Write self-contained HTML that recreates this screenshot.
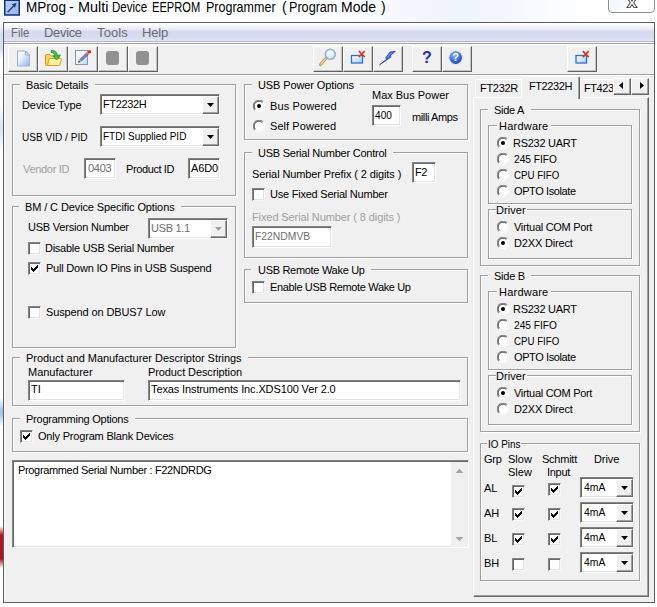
<!DOCTYPE html>
<html><head><meta charset="utf-8"><title>MProg</title>
<style>
*{box-sizing:border-box;margin:0;padding:0}
html,body{width:657px;height:607px;overflow:hidden;background:#fff}
body{position:relative;font-family:"Liberation Sans",sans-serif;font-size:11px;color:#000;line-height:13px}
.a,.t{position:absolute}
.t{white-space:pre;font-size:11px;line-height:13px}
.s12{font-size:12px;line-height:14px}
.s13{font-size:13px;line-height:15px}
.s14{font-size:14px;line-height:16px}
.dis{color:#a0a0a0}
.dis2{color:#6d6d6d}
.mi{color:#6a6a6a}
#title{left:0;top:0;width:657px;height:22px;background:linear-gradient(90deg,#f2f8fe 0%,#ffffff 20%,#fdfeff 50%,#edf4fc 70%,#ffffff 90%)}
#frame{left:3px;top:22px;width:652px;height:581px;border:1px solid #5c5c5c;background:#f0f0f0}
#menu{left:4px;top:23px;width:650px;height:18px;background:linear-gradient(180deg,#ffffff 0%,#fdfdff 8%,#eff0fa 26%,#e3e5f6 40%,#d7daef 47%,#d8dcf0 80%,#e2e5f5 100%)}
.gb{border:1px solid #a0a0a0;box-shadow:1px 1px 0 #fff, inset 1px 1px 0 #fff}
.ed{background:#fff;border:1px solid;border-color:#828282 #fff #fff #828282;box-shadow:inset 1px 1px 0 #696969, inset -1px -1px 0 #e3e3e3}
.cb{width:13px;height:13px;background:#fff;border:1px solid;border-color:#828282 #f6f6f6 #f6f6f6 #828282;box-shadow:inset 1px 1px 0 #696969, inset -1px -1px 0 #e3e3e3}
.rb{width:12px;height:12px;border-radius:50%;background:#fff;border:1px solid;border-color:#828282 #fff #fff #828282;box-shadow:inset 1px 1px 0 #696969}
.rb.on::after{content:"";position:absolute;left:3px;top:3px;width:4px;height:4px;border-radius:50%;background:#000}
.tb{width:30px;height:26px;background:#f0f0f0;border:1px solid;border-color:#fff #606060 #606060 #fff;box-shadow:inset -1px -1px 0 #c4c4c4}
.cbtn,.sbtn{background:#f0f0f0;border:1px solid;border-color:#fff #696969 #696969 #fff;box-shadow:inset -1px -1px 0 #a0a0a0}
</style></head><body>
<div class="a" id="title"></div>
<div class="t s14" style="left:26px;top:-0.8px;transform:scaleX(0.968);transform-origin:0 0;color:#000">MProg</div>
<div class="t s14" style="left:69px;top:-0.8px;color:#000">-</div>
<div class="t s14" style="left:78px;top:-0.8px;transform:scaleX(1.031);transform-origin:0 0;color:#000">Multi</div>
<div class="t s14" style="left:112px;top:-0.8px;transform:scaleX(0.822);transform-origin:0 0;color:#000">Device</div>
<div class="t s14" style="left:152px;top:-0.8px;transform:scaleX(0.795);transform-origin:0 0;color:#000">EEPROM</div>
<div class="t s14" style="left:206px;top:-0.8px;transform:scaleX(0.894);transform-origin:0 0;color:#000">Programmer</div>
<div class="t s14" style="left:282px;top:-0.8px;color:#000">(</div>
<div class="t s14" style="left:289px;top:-0.8px;transform:scaleX(0.901);transform-origin:0 0;color:#000">Program</div>
<div class="t s14" style="left:341px;top:-0.8px;transform:scaleX(0.997);transform-origin:0 0;color:#000">Mode</div>
<div class="t s14" style="left:381px;top:-0.8px;color:#000">)</div>
<div class="a" style="left:608px;top:-4px;width:47px;height:17px;border:1px solid #8e8e8e;border-radius:0 0 4px 4px;background:linear-gradient(90deg,#eef8fc,#ffffff 60%);box-shadow:inset 0 0 0 1px #fff"></div>
<svg class="a" style="left:626px;top:-2px" width="12" height="11" viewBox="0 0 12 11"><path d="M1 0H4L6 3L8 0H11L7.7 4.5L11 9.5H8L6 6.5L4 9.5H1L4.3 4.5Z" fill="#fff" stroke="#505050" stroke-width="1.1"/></svg>
<div class="a" style="left:0;top:22px;width:3px;height:38px;background:linear-gradient(180deg,rgba(212,227,244,0),#d4e3f4 30%,#d4e3f4 70%,rgba(212,227,244,0))"></div>
<div class="a" style="left:0;top:104px;width:3px;height:48px;background:linear-gradient(180deg,rgba(221,233,246,0),#dbe8f6 40%,#dbe8f6 60%,rgba(221,233,246,0))"></div>
<div class="a" style="left:0;top:398px;width:3px;height:28px;background:linear-gradient(180deg,rgba(169,201,234,0),#a9c9ea 40%,#a9c9ea 60%,rgba(169,201,234,0))"></div>
<div class="a" style="left:0;top:526px;width:3px;height:42px;background:linear-gradient(180deg,rgba(181,18,31,0),#b5121f 22%,#b5121f 78%,rgba(181,18,31,0))"></div>
<div class="a" id="frame"></div>
<div class="a" style="left:4px;top:23px;width:1px;height:579px;background:#fafafa"></div>
<div class="a" id="menu"></div>
<div class="t s13 mi" style="left:11px;top:24.8px;transform:scaleX(0.870);transform-origin:0 0;">File</div>
<div class="t s13 mi" style="left:44px;top:24.8px;letter-spacing:-0.33px;">Device</div>
<div class="t s13 mi" style="left:97px;top:24.8px;letter-spacing:0.13px;">Tools</div>
<div class="t s13 mi" style="left:142px;top:24.8px;letter-spacing:-0.14px;">Help</div>
<div class="a" style="left:4px;top:41px;width:650px;height:1px;background:#b5b7c9"></div>
<div class="a" style="left:4px;top:42px;width:650px;height:1px;background:#fafafd"></div>
<div class="a" style="left:4px;top:43px;width:650px;height:1px;background:#a0a0a0"></div>
<div class="a" style="left:4px;top:44px;width:650px;height:1px;background:#fff"></div>
<div class="a" style="left:4px;top:74px;width:650px;height:1px;background:#a0a0a0"></div>
<div class="a" style="left:4px;top:75px;width:650px;height:1px;background:#fff"></div>
<div class="a tb" style="left:8px;top:46px"></div>
<div class="a tb" style="left:38px;top:46px"></div>
<div class="a tb" style="left:68px;top:46px"></div>
<div class="a tb" style="left:98px;top:46px"></div>
<div class="a tb" style="left:128px;top:46px"></div>
<div class="a tb" style="left:313px;top:46px"></div>
<div class="a tb" style="left:343px;top:46px"></div>
<div class="a tb" style="left:373px;top:46px"></div>
<div class="a tb" style="left:412px;top:46px"></div>
<div class="a tb" style="left:441.5px;top:46px"></div>
<div class="a tb" style="left:567px;top:46px"></div>
<svg class="a" style="left:4px;top:0px" width="16" height="16" viewBox="0 0 16 16"><defs><linearGradient id="ig" x1="0" y1="0" x2="1" y2="1"><stop offset="0" stop-color="#b9d2f3"/><stop offset="1" stop-color="#94b6ea"/></linearGradient></defs><rect x="0.75" y="0.25" width="14.5" height="14.75" fill="url(#ig)" stroke="#1b2f73" stroke-width="1.5"/><path d="M3.6 12.2L10.3 5.2" stroke="#22388a" stroke-width="1.3" fill="none"/><path d="M7.6 4.6L12.6 2.8L10.9 7.9L9.9 5.9Z" fill="#22388a"/></svg>
<svg class="a" style="left:16px;top:50px" width="15" height="17" viewBox="0 0 15 17"><defs><linearGradient id="pg" x1="0" y1="0" x2="1" y2="1"><stop offset="0" stop-color="#ffffff"/><stop offset="0.35" stop-color="#eef4fd"/><stop offset="1" stop-color="#8fb5ec"/></linearGradient></defs><path d="M1.5 1H9.5L13.5 5V16H1.5Z" fill="url(#pg)" stroke="#9bb2da"/><path d="M9.5 1V5H13.5Z" fill="#cfdff5" stroke="#8aa3d0" stroke-width="0.8"/></svg>
<svg class="a" style="left:44px;top:49px" width="19" height="18" viewBox="0 0 19 18"><path d="M1.5 6.5Q1.5 5.5 2.5 5.5H6L7.5 7H14.5Q15.5 7 15.5 8V15.5Q15.5 16.5 14.5 16.5H2.5Q1.5 16.5 1.5 15.5Z" fill="#f7d65a" stroke="#c79a1e"/><path d="M3.5 16.5L5 10.5Q5.2 9.5 6.2 9.5H16.5Q17.6 9.5 17.3 10.6L16 15.6Q15.7 16.5 14.8 16.5Z" fill="#fdeea0" stroke="#d0a428"/><path d="M7 1.5Q12.5 1 13.5 6.5L16.5 6L12.5 11L9 6.8L11.3 6.7Q10.5 3.5 7 3.2Z" fill="#3fbf4f" stroke="#1f8f2f" stroke-width="0.8"/></svg>
<svg class="a" style="left:74px;top:48px" width="19" height="18" viewBox="0 0 19 18"><defs><linearGradient id="eg" x1="0" y1="0" x2="1" y2="1"><stop offset="0" stop-color="#ffffff"/><stop offset="0.5" stop-color="#eaf4fd"/><stop offset="1" stop-color="#b4dcf9"/></linearGradient></defs><rect x="1.5" y="2.5" width="12" height="14" fill="url(#eg)" stroke="#8595b9"/><path d="M4 14.8L4.9 12.2L6.7 14Z" fill="#3a3a3a"/><path d="M4.9 12.2L5.9 11.2L7.7 13L6.7 14Z" fill="#c9a36a"/><path d="M5.9 11.2L12.6 4.7L14.5 6.5L7.7 13Z" fill="#8678cc" stroke="#5a4fa0" stroke-width="0.5"/><path d="M12.6 4.7L13.6 3.7L15.5 5.5L14.5 6.5Z" fill="#f0a030"/><circle cx="15.4" cy="3.7" r="1.8" fill="#d8351f"/></svg>
<div class="a" style="left:106px;top:51px;width:13px;height:14px;border-radius:3px;background:#919191"></div>
<div class="a" style="left:136px;top:51px;width:13px;height:14px;border-radius:3px;background:#919191"></div>
<svg class="a" style="left:314px;top:47px" width="26" height="22" viewBox="0 0 26 22"><defs><radialGradient id="lg" cx="0.4" cy="0.35" r="0.7"><stop offset="0" stop-color="#ffffff"/><stop offset="1" stop-color="#bfe0f8"/></radialGradient></defs><path d="M11.8 11.6L6.5 17.6" stroke="#cf9550" stroke-width="3" stroke-linecap="round"/><path d="M11.4 12L6.8 17.2" stroke="#f6d3a0" stroke-width="1.2" stroke-linecap="round"/><circle cx="16.3" cy="7.3" r="5" fill="url(#lg)" stroke="#9ab0c8" stroke-width="1.6"/></svg>
<svg class="a" style="left:350px;top:49px" width="17" height="16" viewBox="0 0 17 16"><defs><linearGradient id="wg" x1="0" y1="0" x2="1" y2="1"><stop offset="0" stop-color="#ffffff"/><stop offset="1" stop-color="#a8cdf5"/></linearGradient></defs><rect x="1.5" y="6.5" width="11" height="7.5" fill="url(#wg)" stroke="#2f6fd0" stroke-width="1.3"/><path d="M8.8 2L14.8 8M14.8 2L8.8 8" stroke="#d03a22" stroke-width="1.7"/></svg>
<svg class="a" style="left:378px;top:50px" width="19" height="16" viewBox="0 0 19 16"><path d="M17.3 1.4L12 2L7.6 8.2L10 8.2L1.6 14.8L13.2 6.8L11 6.8Z" fill="#5b86e6" stroke="#1c3a9c" stroke-width="0.8" stroke-linejoin="round"/></svg>
<div class="a" style="left:420px;top:49px;width:14px;height:18px;font:bold 16px/18px 'Liberation Sans',sans-serif;color:#1030c8;text-align:center">?</div>
<svg class="a" style="left:447px;top:49px" width="18" height="18" viewBox="0 0 18 18"><defs><radialGradient id="hg" cx="0.4" cy="0.3" r="0.8"><stop offset="0" stop-color="#8fb4f4"/><stop offset="0.6" stop-color="#3468d8"/><stop offset="1" stop-color="#1a3fa8"/></radialGradient></defs><circle cx="8.7" cy="8.6" r="7.6" fill="#dfe6f4"/><circle cx="8.7" cy="8.6" r="6.3" fill="url(#hg)"/><text x="8.7" y="12.4" font-family="Liberation Sans, sans-serif" font-weight="bold" font-size="11" fill="#fff" text-anchor="middle">?</text></svg>
<svg class="a" style="left:574px;top:49px" width="17" height="16" viewBox="0 0 17 16"><rect x="2" y="6.5" width="10.5" height="7.5" fill="url(#wg)" stroke="#2f6fd0" stroke-width="1.3"/><path d="M8.8 2.2L14.8 8.2M14.8 2.2L8.8 8.2" stroke="#d03a22" stroke-width="1.7"/></svg>
<div class="a gb" style="left:12px;top:84px;width:224px;height:112px"></div>
<div class="a" style="left:19.5px;top:84px;width:75.0px;height:2px;background:#f0f0f0"></div>
<div class="t" style="left:26px;top:79.2px;letter-spacing:-0.09px;">Basic Details</div>
<div class="t" style="left:22px;top:98.9px;letter-spacing:-0.07px;">Device Type</div>
<div class="a ed" style="left:100px;top:94px;width:120px;height:21px"></div>
<div class="a cbtn" style="left:202px;top:96px;width:17px;height:18px"></div>
<svg class="a" style="left:207px;top:103px" width="7" height="4" viewBox="0 0 7 4"><path d="M0 0H7L3.5 4Z" fill="#000"/></svg>
<div class="t" style="left:103px;top:97.6px;letter-spacing:-0.37px;">FT2232H</div>
<div class="t" style="left:22px;top:130.9px;transform:scaleX(0.916);transform-origin:0 0;">USB VID / PID</div>
<div class="a ed" style="left:100px;top:126px;width:120px;height:21px"></div>
<div class="a cbtn" style="left:202px;top:128px;width:17px;height:18px"></div>
<svg class="a" style="left:207px;top:135px" width="7" height="4" viewBox="0 0 7 4"><path d="M0 0H7L3.5 4Z" fill="#000"/></svg>
<div class="t" style="left:103px;top:129.6px;transform:scaleX(0.909);transform-origin:0 0;">FTDI Supplied PID</div>
<div class="t dis" style="left:23px;top:163.0px;letter-spacing:-0.31px;">Vendor ID</div>
<div class="a ed" style="left:84px;top:158px;width:32px;height:21px"></div>
<div class="t dis2" style="left:88px;top:162.0px;letter-spacing:-0.30px;">0403</div>
<div class="t" style="left:126px;top:163.0px;letter-spacing:-0.39px;">Product ID</div>
<div class="a ed" style="left:188px;top:158px;width:32px;height:21px"></div>
<div class="t" style="left:191px;top:162.0px;letter-spacing:-0.16px;">A6D0</div>
<div class="a gb" style="left:12px;top:206px;width:224px;height:142px"></div>
<div class="a" style="left:19.3px;top:206px;width:162.0px;height:2px;background:#f0f0f0"></div>
<div class="t" style="left:25px;top:200.6px;letter-spacing:-0.11px;">BM / C Device Specific Options</div>
<div class="t" style="left:28px;top:220.7px;letter-spacing:-0.21px;">USB Version Number</div>
<div class="a ed" style="left:148px;top:218px;width:80px;height:21px"></div>
<div class="a cbtn" style="left:210px;top:220px;width:17px;height:18px"></div>
<svg class="a" style="left:215px;top:227px" width="7" height="4" viewBox="0 0 7 4"><path d="M0 0H7L3.5 4Z" fill="#a0a0a0"/></svg>
<div class="t dis2" style="left:151px;top:221.5px;letter-spacing:-0.29px;">USB 1.1</div>
<div class="a cb" style="left:28px;top:242px"></div>
<div class="t" style="left:45px;top:241.6px;letter-spacing:-0.26px;">Disable USB Serial Number</div>
<div class="a cb" style="left:28px;top:262px"></div>
<svg class="a" style="left:31px;top:265px" width="7" height="7" viewBox="0 0 7 7" shape-rendering="crispEdges" fill="#000"><rect x="0" y="2" width="1" height="3"/><rect x="1" y="3" width="1" height="3"/><rect x="2" y="4" width="1" height="3"/><rect x="3" y="3" width="1" height="3"/><rect x="4" y="2" width="1" height="3"/><rect x="5" y="1" width="1" height="3"/><rect x="6" y="0" width="1" height="3"/></svg>
<div class="t" style="left:46px;top:261.6px;letter-spacing:-0.22px;">Pull Down IO Pins in USB Suspend</div>
<div class="a cb" style="left:28px;top:306px"></div>
<div class="t" style="left:46px;top:305.7px;letter-spacing:-0.12px;">Suspend on DBUS7 Low</div>
<div class="a gb" style="left:244px;top:84px;width:224px;height:56px"></div>
<div class="a" style="left:251.75px;top:84px;width:108.5px;height:2px;background:#f0f0f0"></div>
<div class="t" style="left:258px;top:79.2px;letter-spacing:-0.11px;">USB Power Options</div>
<svg class="a" style="left:253px;top:100px" width="12" height="12" viewBox="0 0 12 12"><circle cx="6" cy="6" r="5" fill="#fff"/><path d="M1.9 10.1A5.8 5.8 0 0 1 10.1 1.9" fill="none" stroke="#868686" stroke-width="1.1"/><path d="M2.6 9.4A4.8 4.8 0 0 1 9.4 2.6" fill="none" stroke="#5a5a5a" stroke-width="1"/><path d="M10.1 1.9A5.8 5.8 0 0 1 1.9 10.1" fill="none" stroke="#fff" stroke-width="1"/><path d="M9.4 2.6A4.8 4.8 0 0 1 2.6 9.4" fill="none" stroke="#f6f6f6" stroke-width="1"/><circle cx="6" cy="6" r="2" fill="#000"/></svg>
<div class="t" style="left:270px;top:100.0px;letter-spacing:0.11px;">Bus Powered</div>
<svg class="a" style="left:253px;top:120px" width="12" height="12" viewBox="0 0 12 12"><circle cx="6" cy="6" r="5" fill="#fff"/><path d="M1.9 10.1A5.8 5.8 0 0 1 10.1 1.9" fill="none" stroke="#868686" stroke-width="1.1"/><path d="M2.6 9.4A4.8 4.8 0 0 1 9.4 2.6" fill="none" stroke="#5a5a5a" stroke-width="1"/><path d="M10.1 1.9A5.8 5.8 0 0 1 1.9 10.1" fill="none" stroke="#fff" stroke-width="1"/><path d="M9.4 2.6A4.8 4.8 0 0 1 2.6 9.4" fill="none" stroke="#f6f6f6" stroke-width="1"/></svg>
<div class="t" style="left:270px;top:120.0px;letter-spacing:0.06px;">Self Powered</div>
<div class="t" style="left:372px;top:89.2px;letter-spacing:-0.01px;">Max Bus Power</div>
<div class="a ed" style="left:372px;top:105px;width:29px;height:21px"></div>
<div class="t" style="left:375px;top:108.8px;transform:scaleX(0.920);transform-origin:0 0;">400</div>
<div class="t" style="left:412px;top:110.8px;letter-spacing:-0.39px;">milli Amps</div>
<div class="a gb" style="left:244px;top:152px;width:224px;height:106px"></div>
<div class="a" style="left:251.75px;top:152px;width:141.0px;height:2px;background:#f0f0f0"></div>
<div class="t" style="left:258px;top:147.0px;letter-spacing:-0.24px;">USB Serial Number Control</div>
<div class="t" style="left:252px;top:167.5px;letter-spacing:-0.11px;">Serial Number Prefix ( 2 digits )</div>
<div class="a ed" style="left:412px;top:162px;width:24px;height:21px"></div>
<div class="t" style="left:415px;top:166.2px;letter-spacing:-0.50px;">F2</div>
<div class="a cb" style="left:252px;top:188px"></div>
<div class="t" style="left:270px;top:187.6px;letter-spacing:-0.23px;">Use Fixed Serial Number</div>
<div class="t dis" style="left:252px;top:210.7px;letter-spacing:-0.10px;">Fixed Serial Number ( 8 digits )</div>
<div class="a ed" style="left:252px;top:226px;width:80px;height:22px"></div>
<div class="t dis2" style="left:255px;top:230.3px;transform:scaleX(0.941);transform-origin:0 0;">F22NDMVB</div>
<div class="a gb" style="left:244px;top:269px;width:224px;height:34px"></div>
<div class="a" style="left:251.3px;top:269px;width:119.5px;height:2px;background:#f0f0f0"></div>
<div class="t" style="left:258px;top:263.9px;letter-spacing:-0.30px;">USB Remote Wake Up</div>
<div class="a cb" style="left:252px;top:281px"></div>
<div class="t" style="left:270px;top:280.8px;letter-spacing:-0.35px;">Enable USB Remote Wake Up</div>
<div class="a gb" style="left:12px;top:357px;width:456px;height:49px"></div>
<div class="a" style="left:20.2px;top:357px;width:228.2px;height:2px;background:#f0f0f0"></div>
<div class="t" style="left:26px;top:352.2px;letter-spacing:-0.05px;">Product and Manufacturer Descriptor Strings</div>
<div class="t" style="left:28px;top:365.8px;letter-spacing:-0.02px;">Manufacturer</div>
<div class="a ed" style="left:28px;top:380px;width:97px;height:21px"></div>
<div class="t" style="left:31px;top:383.0px;">TI</div>
<div class="t" style="left:148px;top:365.8px;letter-spacing:-0.11px;">Product Description</div>
<div class="a ed" style="left:148px;top:380px;width:313px;height:21px"></div>
<div class="t" style="left:151px;top:383.0px;letter-spacing:-0.12px;">Texas Instruments Inc.XDS100 Ver 2.0</div>
<div class="a gb" style="left:12px;top:418px;width:456px;height:34px"></div>
<div class="a" style="left:20.2px;top:418px;width:115.1px;height:2px;background:#f0f0f0"></div>
<div class="t" style="left:26px;top:413.2px;letter-spacing:-0.24px;">Programming Options</div>
<div class="a cb" style="left:20px;top:430px"></div>
<svg class="a" style="left:23px;top:433px" width="7" height="7" viewBox="0 0 7 7" shape-rendering="crispEdges" fill="#000"><rect x="0" y="2" width="1" height="3"/><rect x="1" y="3" width="1" height="3"/><rect x="2" y="4" width="1" height="3"/><rect x="3" y="3" width="1" height="3"/><rect x="4" y="2" width="1" height="3"/><rect x="5" y="1" width="1" height="3"/><rect x="6" y="0" width="1" height="3"/></svg>
<div class="t" style="left:38px;top:429.7px;letter-spacing:-0.19px;">Only Program Blank Devices</div>
<div class="a ed" style="left:12px;top:460px;width:457px;height:88px"></div>
<div class="a" style="left:451px;top:462px;width:17px;height:85px;background:#f0f0f0"></div>
<svg class="a" style="left:455px;top:468px" width="9" height="5" viewBox="0 0 9 5"><path d="M0.5 5L4.5 0.8L8.5 5Z" fill="#a6a6a6"/></svg>
<svg class="a" style="left:455px;top:537px" width="9" height="5" viewBox="0 0 9 5"><path d="M0.5 0L4.5 4.2L8.5 0Z" fill="#a6a6a6"/></svg>
<div class="t" style="left:18px;top:463.6px;letter-spacing:-0.34px;">Programmed Serial Number : F22NDRDG</div>
<!--TABS-->
<div class="a " style="left:473px;top:97px;width:176px;height:500px;border:1px solid;border-color:#fff #696969 #696969 #fff;box-shadow:inset -1px -1px 0 #a0a0a0"></div>
<div class="a " style="left:475px;top:79px;width:49px;height:18px;border:1px solid;border-color:#fff #696969 transparent #fff;border-radius:2px 2px 0 0;box-shadow:inset -1px 0 0 #a0a0a0;border-bottom:none"></div>
<div class="a " style="left:579px;top:79px;width:40px;height:18px;border:1px solid;border-color:#fff transparent transparent #fff;border-radius:2px 0 0 0;border-bottom:none;border-right:none"></div>
<div class="a " style="left:521px;top:76px;width:59px;height:23px;background:#f0f0f0;border:1px solid;border-color:#fff #696969 transparent #fff;border-radius:2px 2px 0 0;box-shadow:inset -1px 0 0 #a0a0a0;border-bottom:none"></div>
<div class="t" style="left:480px;top:81.9px;letter-spacing:-0.29px;">FT232R</div>
<div class="t" style="left:529px;top:79.7px;letter-spacing:-0.42px;">FT2232H</div>
<div class="t" style="left:584px;top:81.9px;letter-spacing:-0.43px;">FT423</div>
<div class="a sbtn" style="left:613px;top:78px;width:18px;height:17px;"></div>
<div class="a sbtn" style="left:631px;top:78px;width:18px;height:17px;"></div>
<svg class="a" style="left:619px;top:82px" width="4" height="7" viewBox="0 0 4 7"><path d="M4 0V7L0 3.5Z" fill="#000"/></svg>
<svg class="a" style="left:639.5px;top:82px" width="4" height="7" viewBox="0 0 4 7"><path d="M0 0V7L4 3.5Z" fill="#000"/></svg>
<div class="a gb" style="left:480px;top:109px;width:160px;height:157px"></div>
<div class="a" style="left:487.5px;top:109px;width:43.6px;height:2px;background:#f0f0f0"></div>
<div class="t" style="left:494px;top:103.5px;letter-spacing:-0.27px;">Side A</div>
<div class="a gb" style="left:488px;top:125px;width:144px;height:79px"></div>
<div class="a" style="left:496.8px;top:125px;width:54.7px;height:2px;background:#f0f0f0"></div>
<div class="t" style="left:499px;top:120.2px;letter-spacing:0.22px;">Hardware</div>
<svg class="a" style="left:497px;top:137px" width="12" height="12" viewBox="0 0 12 12"><circle cx="6" cy="6" r="5" fill="#fff"/><path d="M1.9 10.1A5.8 5.8 0 0 1 10.1 1.9" fill="none" stroke="#868686" stroke-width="1.1"/><path d="M2.6 9.4A4.8 4.8 0 0 1 9.4 2.6" fill="none" stroke="#5a5a5a" stroke-width="1"/><path d="M10.1 1.9A5.8 5.8 0 0 1 1.9 10.1" fill="none" stroke="#fff" stroke-width="1"/><path d="M9.4 2.6A4.8 4.8 0 0 1 2.6 9.4" fill="none" stroke="#f6f6f6" stroke-width="1"/><circle cx="6" cy="6" r="2" fill="#000"/></svg>
<div class="t" style="left:513px;top:136.7px;letter-spacing:-0.27px;">RS232 UART</div>
<svg class="a" style="left:497px;top:153px" width="12" height="12" viewBox="0 0 12 12"><circle cx="6" cy="6" r="5" fill="#fff"/><path d="M1.9 10.1A5.8 5.8 0 0 1 10.1 1.9" fill="none" stroke="#868686" stroke-width="1.1"/><path d="M2.6 9.4A4.8 4.8 0 0 1 9.4 2.6" fill="none" stroke="#5a5a5a" stroke-width="1"/><path d="M10.1 1.9A5.8 5.8 0 0 1 1.9 10.1" fill="none" stroke="#fff" stroke-width="1"/><path d="M9.4 2.6A4.8 4.8 0 0 1 2.6 9.4" fill="none" stroke="#f6f6f6" stroke-width="1"/></svg>
<div class="t" style="left:514px;top:152.7px;transform:scaleX(0.925);transform-origin:0 0;">245 FIFO</div>
<svg class="a" style="left:497px;top:169px" width="12" height="12" viewBox="0 0 12 12"><circle cx="6" cy="6" r="5" fill="#fff"/><path d="M1.9 10.1A5.8 5.8 0 0 1 10.1 1.9" fill="none" stroke="#868686" stroke-width="1.1"/><path d="M2.6 9.4A4.8 4.8 0 0 1 9.4 2.6" fill="none" stroke="#5a5a5a" stroke-width="1"/><path d="M10.1 1.9A5.8 5.8 0 0 1 1.9 10.1" fill="none" stroke="#fff" stroke-width="1"/><path d="M9.4 2.6A4.8 4.8 0 0 1 2.6 9.4" fill="none" stroke="#f6f6f6" stroke-width="1"/></svg>
<div class="t" style="left:514px;top:168.7px;transform:scaleX(0.880);transform-origin:0 0;">CPU FIFO</div>
<svg class="a" style="left:497px;top:185px" width="12" height="12" viewBox="0 0 12 12"><circle cx="6" cy="6" r="5" fill="#fff"/><path d="M1.9 10.1A5.8 5.8 0 0 1 10.1 1.9" fill="none" stroke="#868686" stroke-width="1.1"/><path d="M2.6 9.4A4.8 4.8 0 0 1 9.4 2.6" fill="none" stroke="#5a5a5a" stroke-width="1"/><path d="M10.1 1.9A5.8 5.8 0 0 1 1.9 10.1" fill="none" stroke="#fff" stroke-width="1"/><path d="M9.4 2.6A4.8 4.8 0 0 1 2.6 9.4" fill="none" stroke="#f6f6f6" stroke-width="1"/></svg>
<div class="t" style="left:514px;top:184.7px;letter-spacing:-0.40px;">OPTO Isolate</div>
<div class="a gb" style="left:488px;top:209px;width:144px;height:50px"></div>
<div class="a" style="left:495.5px;top:209px;width:31.2px;height:2px;background:#f0f0f0"></div>
<div class="t" style="left:496px;top:204.0px;letter-spacing:0.05px;">Driver</div>
<svg class="a" style="left:497px;top:221px" width="12" height="12" viewBox="0 0 12 12"><circle cx="6" cy="6" r="5" fill="#fff"/><path d="M1.9 10.1A5.8 5.8 0 0 1 10.1 1.9" fill="none" stroke="#868686" stroke-width="1.1"/><path d="M2.6 9.4A4.8 4.8 0 0 1 9.4 2.6" fill="none" stroke="#5a5a5a" stroke-width="1"/><path d="M10.1 1.9A5.8 5.8 0 0 1 1.9 10.1" fill="none" stroke="#fff" stroke-width="1"/><path d="M9.4 2.6A4.8 4.8 0 0 1 2.6 9.4" fill="none" stroke="#f6f6f6" stroke-width="1"/></svg>
<div class="t" style="left:514px;top:220.7px;letter-spacing:-0.30px;">Virtual COM Port</div>
<svg class="a" style="left:497px;top:237px" width="12" height="12" viewBox="0 0 12 12"><circle cx="6" cy="6" r="5" fill="#fff"/><path d="M1.9 10.1A5.8 5.8 0 0 1 10.1 1.9" fill="none" stroke="#868686" stroke-width="1.1"/><path d="M2.6 9.4A4.8 4.8 0 0 1 9.4 2.6" fill="none" stroke="#5a5a5a" stroke-width="1"/><path d="M10.1 1.9A5.8 5.8 0 0 1 1.9 10.1" fill="none" stroke="#fff" stroke-width="1"/><path d="M9.4 2.6A4.8 4.8 0 0 1 2.6 9.4" fill="none" stroke="#f6f6f6" stroke-width="1"/><circle cx="6" cy="6" r="2" fill="#000"/></svg>
<div class="t" style="left:514px;top:236.7px;letter-spacing:-0.16px;">D2XX Direct</div>
<div class="a gb" style="left:480px;top:275px;width:160px;height:157px"></div>
<div class="a" style="left:487.5px;top:275px;width:43.6px;height:2px;background:#f0f0f0"></div>
<div class="t" style="left:494px;top:269.5px;letter-spacing:-0.24px;">Side B</div>
<div class="a gb" style="left:488px;top:291px;width:144px;height:79px"></div>
<div class="a" style="left:496.8px;top:291px;width:54.7px;height:2px;background:#f0f0f0"></div>
<div class="t" style="left:499px;top:286.2px;letter-spacing:0.22px;">Hardware</div>
<svg class="a" style="left:497px;top:303px" width="12" height="12" viewBox="0 0 12 12"><circle cx="6" cy="6" r="5" fill="#fff"/><path d="M1.9 10.1A5.8 5.8 0 0 1 10.1 1.9" fill="none" stroke="#868686" stroke-width="1.1"/><path d="M2.6 9.4A4.8 4.8 0 0 1 9.4 2.6" fill="none" stroke="#5a5a5a" stroke-width="1"/><path d="M10.1 1.9A5.8 5.8 0 0 1 1.9 10.1" fill="none" stroke="#fff" stroke-width="1"/><path d="M9.4 2.6A4.8 4.8 0 0 1 2.6 9.4" fill="none" stroke="#f6f6f6" stroke-width="1"/><circle cx="6" cy="6" r="2" fill="#000"/></svg>
<div class="t" style="left:513px;top:302.7px;letter-spacing:-0.27px;">RS232 UART</div>
<svg class="a" style="left:497px;top:319px" width="12" height="12" viewBox="0 0 12 12"><circle cx="6" cy="6" r="5" fill="#fff"/><path d="M1.9 10.1A5.8 5.8 0 0 1 10.1 1.9" fill="none" stroke="#868686" stroke-width="1.1"/><path d="M2.6 9.4A4.8 4.8 0 0 1 9.4 2.6" fill="none" stroke="#5a5a5a" stroke-width="1"/><path d="M10.1 1.9A5.8 5.8 0 0 1 1.9 10.1" fill="none" stroke="#fff" stroke-width="1"/><path d="M9.4 2.6A4.8 4.8 0 0 1 2.6 9.4" fill="none" stroke="#f6f6f6" stroke-width="1"/></svg>
<div class="t" style="left:514px;top:318.7px;transform:scaleX(0.925);transform-origin:0 0;">245 FIFO</div>
<svg class="a" style="left:497px;top:335px" width="12" height="12" viewBox="0 0 12 12"><circle cx="6" cy="6" r="5" fill="#fff"/><path d="M1.9 10.1A5.8 5.8 0 0 1 10.1 1.9" fill="none" stroke="#868686" stroke-width="1.1"/><path d="M2.6 9.4A4.8 4.8 0 0 1 9.4 2.6" fill="none" stroke="#5a5a5a" stroke-width="1"/><path d="M10.1 1.9A5.8 5.8 0 0 1 1.9 10.1" fill="none" stroke="#fff" stroke-width="1"/><path d="M9.4 2.6A4.8 4.8 0 0 1 2.6 9.4" fill="none" stroke="#f6f6f6" stroke-width="1"/></svg>
<div class="t" style="left:514px;top:334.7px;transform:scaleX(0.880);transform-origin:0 0;">CPU FIFO</div>
<svg class="a" style="left:497px;top:351px" width="12" height="12" viewBox="0 0 12 12"><circle cx="6" cy="6" r="5" fill="#fff"/><path d="M1.9 10.1A5.8 5.8 0 0 1 10.1 1.9" fill="none" stroke="#868686" stroke-width="1.1"/><path d="M2.6 9.4A4.8 4.8 0 0 1 9.4 2.6" fill="none" stroke="#5a5a5a" stroke-width="1"/><path d="M10.1 1.9A5.8 5.8 0 0 1 1.9 10.1" fill="none" stroke="#fff" stroke-width="1"/><path d="M9.4 2.6A4.8 4.8 0 0 1 2.6 9.4" fill="none" stroke="#f6f6f6" stroke-width="1"/></svg>
<div class="t" style="left:514px;top:350.7px;letter-spacing:-0.40px;">OPTO Isolate</div>
<div class="a gb" style="left:488px;top:375px;width:144px;height:50px"></div>
<div class="a" style="left:495.5px;top:375px;width:31.2px;height:2px;background:#f0f0f0"></div>
<div class="t" style="left:496px;top:370.0px;letter-spacing:0.05px;">Driver</div>
<svg class="a" style="left:497px;top:387px" width="12" height="12" viewBox="0 0 12 12"><circle cx="6" cy="6" r="5" fill="#fff"/><path d="M1.9 10.1A5.8 5.8 0 0 1 10.1 1.9" fill="none" stroke="#868686" stroke-width="1.1"/><path d="M2.6 9.4A4.8 4.8 0 0 1 9.4 2.6" fill="none" stroke="#5a5a5a" stroke-width="1"/><path d="M10.1 1.9A5.8 5.8 0 0 1 1.9 10.1" fill="none" stroke="#fff" stroke-width="1"/><path d="M9.4 2.6A4.8 4.8 0 0 1 2.6 9.4" fill="none" stroke="#f6f6f6" stroke-width="1"/><circle cx="6" cy="6" r="2" fill="#000"/></svg>
<div class="t" style="left:514px;top:386.7px;letter-spacing:-0.30px;">Virtual COM Port</div>
<svg class="a" style="left:497px;top:403px" width="12" height="12" viewBox="0 0 12 12"><circle cx="6" cy="6" r="5" fill="#fff"/><path d="M1.9 10.1A5.8 5.8 0 0 1 10.1 1.9" fill="none" stroke="#868686" stroke-width="1.1"/><path d="M2.6 9.4A4.8 4.8 0 0 1 9.4 2.6" fill="none" stroke="#5a5a5a" stroke-width="1"/><path d="M10.1 1.9A5.8 5.8 0 0 1 1.9 10.1" fill="none" stroke="#fff" stroke-width="1"/><path d="M9.4 2.6A4.8 4.8 0 0 1 2.6 9.4" fill="none" stroke="#f6f6f6" stroke-width="1"/></svg>
<div class="t" style="left:514px;top:402.7px;letter-spacing:-0.16px;">D2XX Direct</div>
<div class="a gb" style="left:480px;top:443px;width:160px;height:138px"></div>
<div class="a" style="left:487.1px;top:443px;width:34.1px;height:2px;background:#f0f0f0"></div>
<div class="t" style="left:488px;top:437.5px;transform:scaleX(0.899);transform-origin:0 0;">IO Pins</div>
<div class="t" style="left:484px;top:453.4px;letter-spacing:-0.27px;">Grp</div>
<div class="t" style="left:508px;top:453.4px;">Slow</div>
<div class="t" style="left:508px;top:465.9px;">Slew</div>
<div class="t" style="left:542px;top:453.4px;letter-spacing:-0.24px;">Schmitt</div>
<div class="t" style="left:547px;top:465.9px;letter-spacing:-0.28px;">Input</div>
<div class="t" style="left:594px;top:453.4px;letter-spacing:-0.08px;">Drive</div>
<div class="t" style="left:484px;top:482.1px;">AL</div>
<div class="a cb" style="left:512px;top:485px"></div>
<svg class="a" style="left:515px;top:488px" width="7" height="7" viewBox="0 0 7 7" shape-rendering="crispEdges" fill="#000"><rect x="0" y="2" width="1" height="3"/><rect x="1" y="3" width="1" height="3"/><rect x="2" y="4" width="1" height="3"/><rect x="3" y="3" width="1" height="3"/><rect x="4" y="2" width="1" height="3"/><rect x="5" y="1" width="1" height="3"/><rect x="6" y="0" width="1" height="3"/></svg>
<div class="a cb" style="left:548px;top:483px"></div>
<svg class="a" style="left:551px;top:486px" width="7" height="7" viewBox="0 0 7 7" shape-rendering="crispEdges" fill="#000"><rect x="0" y="2" width="1" height="3"/><rect x="1" y="3" width="1" height="3"/><rect x="2" y="4" width="1" height="3"/><rect x="3" y="3" width="1" height="3"/><rect x="4" y="2" width="1" height="3"/><rect x="5" y="1" width="1" height="3"/><rect x="6" y="0" width="1" height="3"/></svg>
<div class="a ed" style="left:580px;top:477px;width:54px;height:21px"></div>
<div class="a cbtn" style="left:616px;top:479px;width:17px;height:18px"></div>
<svg class="a" style="left:621px;top:486px" width="7" height="4" viewBox="0 0 7 4"><path d="M0 0H7L3.5 4Z" fill="#000"/></svg>
<div class="t" style="left:584px;top:480.8px;transform:scaleX(0.942);transform-origin:0 0;">4mA</div>
<div class="t" style="left:484px;top:507.1px;">AH</div>
<div class="a cb" style="left:512px;top:508px"></div>
<svg class="a" style="left:515px;top:511px" width="7" height="7" viewBox="0 0 7 7" shape-rendering="crispEdges" fill="#000"><rect x="0" y="2" width="1" height="3"/><rect x="1" y="3" width="1" height="3"/><rect x="2" y="4" width="1" height="3"/><rect x="3" y="3" width="1" height="3"/><rect x="4" y="2" width="1" height="3"/><rect x="5" y="1" width="1" height="3"/><rect x="6" y="0" width="1" height="3"/></svg>
<div class="a cb" style="left:548px;top:508px"></div>
<svg class="a" style="left:551px;top:511px" width="7" height="7" viewBox="0 0 7 7" shape-rendering="crispEdges" fill="#000"><rect x="0" y="2" width="1" height="3"/><rect x="1" y="3" width="1" height="3"/><rect x="2" y="4" width="1" height="3"/><rect x="3" y="3" width="1" height="3"/><rect x="4" y="2" width="1" height="3"/><rect x="5" y="1" width="1" height="3"/><rect x="6" y="0" width="1" height="3"/></svg>
<div class="a ed" style="left:580px;top:502px;width:54px;height:21px"></div>
<div class="a cbtn" style="left:616px;top:504px;width:17px;height:18px"></div>
<svg class="a" style="left:621px;top:511px" width="7" height="4" viewBox="0 0 7 4"><path d="M0 0H7L3.5 4Z" fill="#000"/></svg>
<div class="t" style="left:584px;top:505.8px;transform:scaleX(0.942);transform-origin:0 0;">4mA</div>
<div class="t" style="left:484px;top:532.1px;">BL</div>
<div class="a cb" style="left:512px;top:533px"></div>
<svg class="a" style="left:515px;top:536px" width="7" height="7" viewBox="0 0 7 7" shape-rendering="crispEdges" fill="#000"><rect x="0" y="2" width="1" height="3"/><rect x="1" y="3" width="1" height="3"/><rect x="2" y="4" width="1" height="3"/><rect x="3" y="3" width="1" height="3"/><rect x="4" y="2" width="1" height="3"/><rect x="5" y="1" width="1" height="3"/><rect x="6" y="0" width="1" height="3"/></svg>
<div class="a cb" style="left:548px;top:533px"></div>
<svg class="a" style="left:551px;top:536px" width="7" height="7" viewBox="0 0 7 7" shape-rendering="crispEdges" fill="#000"><rect x="0" y="2" width="1" height="3"/><rect x="1" y="3" width="1" height="3"/><rect x="2" y="4" width="1" height="3"/><rect x="3" y="3" width="1" height="3"/><rect x="4" y="2" width="1" height="3"/><rect x="5" y="1" width="1" height="3"/><rect x="6" y="0" width="1" height="3"/></svg>
<div class="a ed" style="left:580px;top:527px;width:54px;height:21px"></div>
<div class="a cbtn" style="left:616px;top:529px;width:17px;height:18px"></div>
<svg class="a" style="left:621px;top:536px" width="7" height="4" viewBox="0 0 7 4"><path d="M0 0H7L3.5 4Z" fill="#000"/></svg>
<div class="t" style="left:584px;top:530.8px;transform:scaleX(0.942);transform-origin:0 0;">4mA</div>
<div class="t" style="left:484px;top:557.1px;">BH</div>
<div class="a cb" style="left:512px;top:558px"></div>
<div class="a cb" style="left:548px;top:558px"></div>
<div class="a ed" style="left:580px;top:552px;width:54px;height:21px"></div>
<div class="a cbtn" style="left:616px;top:554px;width:17px;height:18px"></div>
<svg class="a" style="left:621px;top:561px" width="7" height="4" viewBox="0 0 7 4"><path d="M0 0H7L3.5 4Z" fill="#000"/></svg>
<div class="t" style="left:584px;top:555.8px;transform:scaleX(0.942);transform-origin:0 0;">4mA</div>
</body></html>
